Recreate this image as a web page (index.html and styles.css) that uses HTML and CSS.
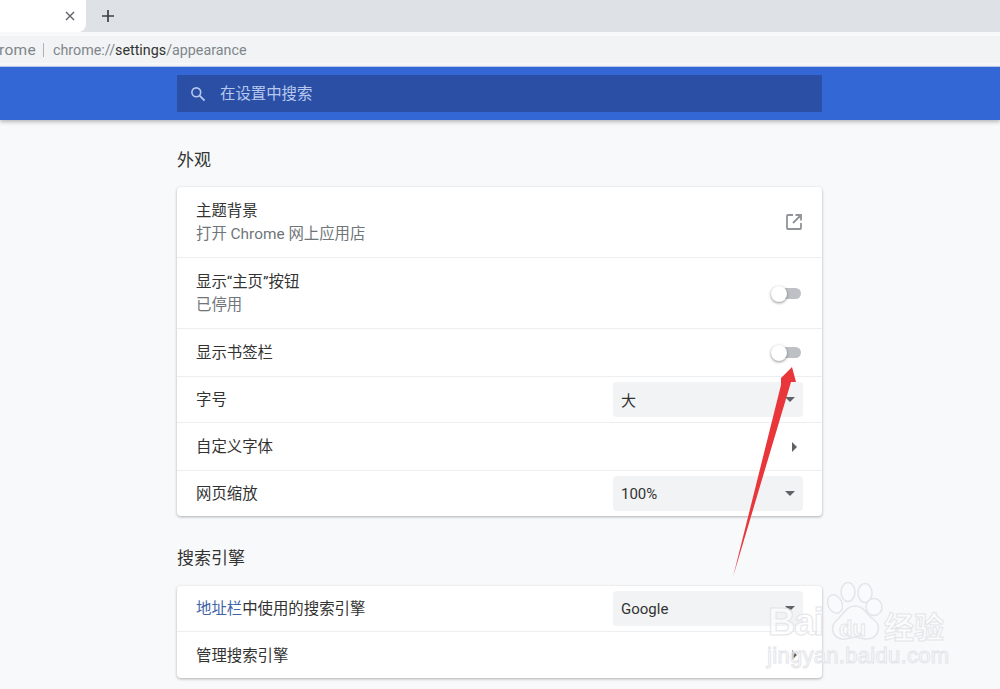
FILE: index.html
```html
<!DOCTYPE html>
<html lang="zh-CN">
<head>
    <meta charset="UTF-8">
    <title>设置 - 外观</title>
    <link rel="stylesheet" href="styles.css">
</head>
<body>
    <div class="tabstrip">
        <div class="tab">
            <svg class="tab-close" width="10" height="10" viewBox="0 0 10 10"><path d="M1 1l8 8M9 1l-8 8" stroke="#5f6368" stroke-width="1.4" fill="none"/></svg>
        </div>
        <svg class="new-tab" width="12" height="12" viewBox="0 0 12 12"><path d="M6 0v12M0 6h12" stroke="#3c4043" stroke-width="1.7" fill="none"/></svg>
    </div>
    <div class="addressbar">
        <div class="site-name"><span>Chrome</span></div>
        <div class="url"><span>chrome://</span><b>settings</b><span>/appearance</span></div>
    </div>

    <header class="header">
        <div class="searchbox">
            <svg width="16" height="16" viewBox="0 0 16 16"><circle cx="6.3" cy="6.3" r="4.4" stroke="#b6c8ee" stroke-width="1.6" fill="none"/><path d="M9.6 9.6l5 5" stroke="#b6c8ee" stroke-width="1.8" fill="none"/></svg>
            <span>在设置中搜索</span>
        </div>
    </header>

    <main class="content">
        <h2 class="section-title first">外观</h2>
        <section class="card">
            <div class="row tall">
                <div>
                    <div class="label">主题背景</div>
                    <div class="sub">打开 Chrome 网上应用店</div>
                </div>
                <svg class="open-icon" width="16" height="16" viewBox="0 0 16 16"><path d="M7 1H2a1 1 0 0 0-1 1v12a1 1 0 0 0 1 1h12a1 1 0 0 0 1-1V9M9.500 1H15v5.500M15 1L7 9" stroke="#909398" stroke-width="1.800" fill="none"/></svg>
            </div>
            <div class="row tall">
                <div>
                    <div class="label">显示“主页”按钮</div>
                    <div class="sub">已停用</div>
                </div>
                <div class="toggle"><i></i></div>
            </div>
            <div class="row mid">
                <div class="label">显示书签栏</div>
                <div class="toggle"><i></i></div>
            </div>
            <div class="row short">
                <div class="label">字号</div>
                <div class="select"><span>大</span><i class="caret"></i></div>
            </div>
            <div class="row mid">
                <div class="label">自定义字体</div>
                <i class="chevron"></i>
            </div>
            <div class="row short">
                <div class="label">网页缩放</div>
                <div class="select"><span>100%</span><i class="caret"></i></div>
            </div>
        </section>

        <h2 class="section-title">搜索引擎</h2>
        <section class="card">
            <div class="row engine">
                <div class="label"><a href="#">地址栏</a>中使用的搜索引擎</div>
                <div class="select"><span>Google</span><i class="caret"></i></div>
            </div>
            <div class="row manage">
                <div class="label">管理搜索引擎</div>
                <i class="chevron"></i>
            </div>
        </section>
    </main>

    <!-- red arrow drawn on top of the screenshot -->
    <svg class="arrow" width="1000" height="689" viewBox="0 0 1000 689">
        <path d="M733 577L781 385L781 378L792 367L796 382L791 382Z" fill="#e8363a"/>
    </svg>

    <div class="watermark">
        <svg class="paw" width="70" height="70" viewBox="0 0 70 70">
            <g fill="#f9fafb" stroke="#e3e5e9" stroke-width="1.500">
                <ellipse cx="13" cy="22" rx="7" ry="9.500" transform="rotate(-25 13 22)"/>
                <ellipse cx="26" cy="10" rx="7" ry="9.500"/>
                <ellipse cx="43" cy="11" rx="7" ry="9.500"/>
                <ellipse cx="52" cy="25" rx="8" ry="8.500"/>
                <path d="M33 24c9 0 12 9 19 14c8 6 5 19-8 19c-4 0-7-2-11-2s-8 3-13 2c-11-2-12-13-5-19c6-5 9-14 18-14z"/>
            </g>
        </svg>
        <span class="wm-bai">Bai</span>
        <span class="wm-du">du</span>
        <span class="wm-cn">经验</span>
        <span class="wm-url">jingyan.baidu.com</span>
    </div>
</body>
</html>
```

FILE: styles.css
```css
* {
    box-sizing: border-box;
}

html, body {
    height: 689px;
    overflow: hidden;
}

body {
    margin: 0;
    background: #f8f9fa;
    color: #333;
    font-family: Roboto, "Noto Sans CJK SC", sans-serif;
    font-size: 15.4px;
}

/* browser chrome */
.tabstrip {
    display: flex;
    align-items: center;
    height: 32px;
    background: #dee1e6;
}

.tab {
    display: flex;
    align-items: center;
    justify-content: flex-end;
    width: 86px;
    height: 32px;
    padding-right: 11px;
    background: #fff;
    border-bottom-right-radius: 8px;
}

.new-tab {
    margin-left: 16px;
}

.addressbar {
    display: flex;
    align-items: center;
    height: 27px;
    margin: 4px 0 3px;
    background: #f1f3f4;
    font-size: 14.300px;
    color: #80868b;
}

.site-name {
    display: flex;
    justify-content: flex-end;
    width: 44px;
    padding-right: 7px;
    border-right: 1px solid #aeb2b6;
    font-size: 15.500px;
    letter-spacing: 0.300px;
    line-height: 14px;
    overflow: hidden;
    flex: none;
}

.url {
    margin-left: 9px;
}

.url b {
    font-weight: 400;
    color: #333;
}

/* blue settings header */
.header {
    height: 54px;
    padding: 8px 178px 0 177px;
    background: #3367d6;
    border-top: 1px solid #b9c9e8;
    box-shadow: 0 2px 4px rgba(60, 64, 67, 0.35);
}

.searchbox {
    display: flex;
    align-items: center;
    gap: 14px;
    height: 37px;
    padding-left: 13px;
    background: #2a4fa5;
    color: #b6c8ee;
}

.searchbox span {
    margin-bottom: 3px;
}

/* page body */
.content {
    width: 645px;
    margin-left: 177px;
}

.section-title {
    margin: 0;
    height: 70px;
    padding-top: 30px;
    font-size: 17px;
    font-weight: 400;
    line-height: 24px;
    color: #333;
}

.section-title.first {
    height: 67px;
    padding-top: 28px;
}

.card {
    background: #fff;
    border-radius: 4px;
    box-shadow: 0 1px 3px rgba(60, 64, 67, 0.4);
}

.row {
    display: flex;
    align-items: center;
    justify-content: space-between;
    padding: 0 19px;
    border-top: 1px solid #eceef0;
}

.row:first-child {
    border-top: none;
}

.tall {
    height: 71px;
}

.tall:first-child {
    height: 70px;
}

.mid {
    height: 48px;
}

.short {
    height: 46px;
}

.engine {
    height: 45px;
}

.manage {
    height: 47px;
}

.label {
    padding-top: 2px;
    line-height: 23px;
}

.label a {
    color: #3f63a8;
    text-decoration: none;
}

.sub {
    line-height: 23px;
    color: #70757a;
}

.open-icon {
    margin-right: 1px;
}

.toggle {
    position: relative;
    width: 28px;
    height: 11px;
    margin-right: 2px;
    background: #bdc1c6;
    border-radius: 6px;
}

.toggle i {
    position: absolute;
    left: -2px;
    top: -2px;
    width: 16px;
    height: 16px;
    background: #fff;
    border-radius: 50%;
    box-shadow: 0 1px 3px rgba(0, 0, 0, 0.45);
}

.select {
    display: flex;
    align-items: center;
    justify-content: space-between;
    width: 190px;
    height: 35px;
    padding: 0 8px;
    background: #f1f3f4;
    border-radius: 4px;
    font-size: 15px;
}

.caret {
    width: 0;
    height: 0;
    border-left: 5px solid transparent;
    border-right: 5px solid transparent;
    border-top: 5px solid #5f6368;
}

.chevron {
    width: 0;
    height: 0;
    margin-right: 6px;
    border-top: 5px solid transparent;
    border-bottom: 5px solid transparent;
    border-left: 5px solid #5f6368;
}

/* overlays */
.arrow {
    position: absolute;
    left: 0;
    top: 0;
    pointer-events: none;
}

.watermark {
    position: absolute;
    left: 760px;
    top: 580px;
    width: 200px;
    height: 100px;
    font-family: "Liberation Sans", sans-serif;
    color: rgba(255, 255, 255, 0.6);
    -webkit-text-stroke: 1px #e3e5e9;
    pointer-events: none;
}

.watermark span {
    position: absolute;
    white-space: nowrap;
}

.paw {
    position: absolute;
    left: 62px;
    top: 2px;
}

.wm-bai {
    left: 8px;
    top: 21px;
    font-size: 38px;
    font-weight: 700;
    letter-spacing: -1.500px;
}

.wm-du {
    left: 79px;
    top: 36px;
    font-size: 22px;
    font-weight: 700;
}

.wm-cn {
    left: 124px;
    top: 30px;
    font-family: "Noto Sans CJK SC", sans-serif;
    font-size: 30px;
    font-weight: 700;
    line-height: 30px;
}

.wm-url {
    left: 7px;
    top: 63px;
    font-size: 22px;
    letter-spacing: 0.300px;
}
```
